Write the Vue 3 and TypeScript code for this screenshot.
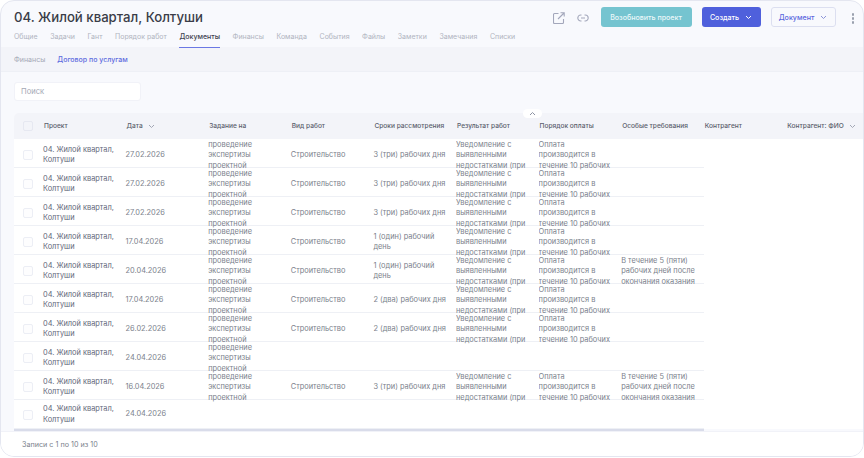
<script setup lang="ts">
interface Row {
  date: string
  task: boolean
  kind: string
  term: string
  result: boolean
  special: boolean
}

const tabs = ['Общие', 'Задачи', 'Гант', 'Порядок работ', 'Документы', 'Финансы', 'Команда', 'События', 'Файлы', 'Заметки', 'Замечания', 'Списки']
const headers = ['Задание на', 'Вид работ', 'Сроки рассмотрения', 'Результат работ', 'Порядок оплаты', 'Особые требования', 'Контрагент']

const three = '3 (три) рабочих дня'
const one = '1 (один) рабочий день'
const two = '2 (два) рабочих дня'
const build = 'Строительство'

const rows: Row[] = [
  { date: '27.02.2026', task: true, kind: build, term: three, result: true, special: false },
  { date: '27.02.2026', task: true, kind: build, term: three, result: true, special: false },
  { date: '27.02.2026', task: true, kind: build, term: three, result: true, special: false },
  { date: '17.04.2026', task: true, kind: build, term: one, result: true, special: false },
  { date: '20.04.2026', task: true, kind: build, term: one, result: true, special: true },
  { date: '17.04.2026', task: true, kind: build, term: two, result: true, special: false },
  { date: '26.02.2026', task: true, kind: build, term: two, result: true, special: false },
  { date: '24.04.2026', task: true, kind: '', term: '', result: false, special: false },
  { date: '16.04.2026', task: true, kind: build, term: three, result: true, special: true },
  { date: '24.04.2026', task: false, kind: '', term: '', result: false, special: false },
]
</script>

<template>
  <div class="page">
    <header class="top">
      <div class="top-left">
        <h1 class="title">04. Жилой квартал, Колтуши</h1>
        <nav class="tabs">
          <span v-for="t in tabs" :key="t" class="tab" :class="{ active: t === 'Документы' }">{{ t }}</span>
        </nav>
      </div>
      <div class="actions">
        <svg class="icon" width="12" height="12" viewBox="0 0 12 12" fill="none" stroke="#a3a7bb" stroke-width="1.1">
          <path d="M5.5 1.5H1.5a1 1 0 0 0-1 1v8a1 1 0 0 0 1 1h8a1 1 0 0 0 1-1V7" />
          <path d="M5 7l6-6M7.5.8h3.7v3.7" />
        </svg>
        <svg class="icon link" width="12" height="8" viewBox="0 0 12 8" fill="none" stroke="#a3a7bb" stroke-width="1.1">
          <path d="M4.5 1H3.8a3 3 0 0 0 0 6h.7M7.5 1h.7a3 3 0 0 1 0 6h-.7M4 4h4" />
        </svg>
        <button class="btn resume">Возобновить проект</button>
        <button class="btn create">Создать
          <svg width="7" height="5" viewBox="0 0 7 5" fill="none" stroke="#fff" stroke-width="1"><path d="m1 1 2.5 2.5L6 1" /></svg>
        </button>
        <button class="btn doc">Документ
          <svg width="7" height="5" viewBox="0 0 7 5" fill="none" stroke="#8d95d8" stroke-width="1"><path d="m1 1 2.5 2.5L6 1" /></svg>
        </button>
        <span class="dots"><i></i><i></i><i></i></span>
      </div>
    </header>

    <div class="subtabs">
      <span class="subtab">Финансы</span>
      <span class="subtab current">Договор по услугам</span>
    </div>

    <div class="search-row">
      <div class="search">Поиск</div>
    </div>

    <div class="table-wrap">
      <button class="collapse">
        <svg width="7" height="5" viewBox="0 0 7 5" fill="none" stroke="#8d93a3" stroke-width="1"><path d="m1 4 2.5-2.5L6 4" /></svg>
      </button>
      <div class="line head">
        <div class="check-cell"><span class="check"></span></div>
        <div class="h">Проект</div>
        <div class="h">Дата
          <svg class="chev" width="7" height="5" viewBox="0 0 7 5" fill="none" stroke="#a3a7b5" stroke-width="1"><path d="m1 1 2.5 2.5L6 1" /></svg>
        </div>
        <div v-for="h in headers" :key="h" class="h">{{ h }}</div>
        <div class="h">Контрагент: ФИО
          <svg class="chev" width="7" height="5" viewBox="0 0 7 5" fill="none" stroke="#a3a7b5" stroke-width="1"><path d="m1 1 2.5 2.5L6 1" /></svg>
        </div>
      </div>
      <div v-for="(r, i) in rows" :key="i" class="line row">
        <div class="check-cell"><span class="check"></span></div>
        <div class="c project">04. Жилой квартал, Колтуши</div>
        <div class="c date">{{ r.date }}</div>
        <div class="c"><span v-if="r.task" class="clip">проведение экспертизы проектной документации</span></div>
        <div class="c">{{ r.kind }}</div>
        <div class="c">{{ r.term }}</div>
        <div class="c"><span v-if="r.result" class="clip">Уведомление с выявленными недостатками (при наличии)</span></div>
        <div class="c"><span v-if="r.result" class="clip">Оплата производится в течение 10 рабочих дней</span></div>
        <div class="c"><span v-if="r.special" class="clip">В течение 5 (пяти) рабочих дней после окончания оказания услуг</span></div>
      </div>
      <div class="table-end"></div>
    </div>

    <footer class="foot">Записи с 1 по 10 из 10</footer>
  </div>
</template>

<style>
html, body {
  margin: 0;
  background: #fff;
}
</style>

<style scoped>
.page {
  box-sizing: border-box;
  width: 864px;
  height: 457px;
  background: #f8f9fd;
  border: 1px solid #e4e6f0;
  border-radius: 14px;
  font-family: Inter, "Liberation Sans", sans-serif;
  overflow: hidden;
  color: #6f7482;
}

.top {
  display: flex;
  justify-content: space-between;
  height: 46px;
  padding: 0 9px 0 13px;
}
.title {
  margin: 8px 0 0;
  font-size: 13.2px;
  line-height: 17px;
  font-weight: 500;
  color: #3a3d48;
}
.tabs {
  display: flex;
  gap: 12.6px;
  margin-top: 2px;
}
.tab {
  font-size: 7px;
  line-height: 18px;
  height: 19px;
  color: #b0b4c0;
  white-space: nowrap;
}
.tab.active {
  color: #3f4350;
  font-weight: 500;
  border-bottom: 1px solid #6b78e4;
}

.actions {
  display: flex;
  align-items: flex-start;
  padding-top: 6px;
}
.icon {
  margin-top: 5px;
}
.icon.link {
  margin: 7px 12px 0 12px;
}
.btn {
  height: 20px;
  border-radius: 3px;
  border: 1px solid transparent;
  font-family: inherit;
  font-size: 7.1px;
  font-weight: 500;
  padding: 0;
  display: flex;
  align-items: center;
  justify-content: center;
  gap: 6px;
}
.resume {
  width: 91px;
  background: #75c4d0;
  color: #eaf7f9;
}
.create {
  width: 59px;
  margin-left: 10px;
  background: #4f60dc;
  color: #fff;
}
.doc {
  width: 65px;
  margin-left: 10px;
  background: #f8f9fd;
  border-color: #dcdff0;
  color: #5a68dd;
}
.dots {
  display: flex;
  flex-direction: column;
  gap: 1.5px;
  margin: 6px 0 0 16px;
}
.dots i {
  width: 2.5px;
  height: 2.5px;
  border-radius: 50%;
  background: #9aa0ae;
}

.subtabs {
  display: flex;
  gap: 12px;
  align-items: center;
  height: 24px;
  padding-left: 13px;
  background: #f3f4f9;
  border-bottom: 1px solid #eef0f6;
}
.subtab {
  font-size: 7px;
  color: #a4a8b5;
}
.subtab.current {
  color: #5e6cdf;
  font-weight: 500;
}

.search-row {
  padding: 10px 13px 0;
  height: 19px;
}
.search {
  box-sizing: border-box;
  width: 127px;
  height: 19px;
  border-radius: 3px;
  background: #fff;
  border: 1px solid #f1f2f8;
  padding-left: 6px;
  font-size: 7.6px;
  line-height: 17px;
  color: #a4a8b5;
}

.table-wrap {
  position: relative;
  margin: 12px 0 0 13px;
}
.collapse {
  position: absolute;
  top: -4px;
  left: 509px;
  width: 19px;
  height: 9px;
  padding: 0;
  border: 0;
  border-radius: 5px;
  background: #fff;
  display: flex;
  align-items: center;
  justify-content: center;
  z-index: 2;
}
.line {
  display: grid;
  grid-template-columns: 30px repeat(9, 82.6px) 1fr;
}
.head {
  height: 26px;
  background: #f3f4f9;
  border-radius: 5px 0 0 0;
  align-items: center;
}
.h {
  font-size: 6.6px;
  font-weight: 500;
  color: #5b5f6d;
  white-space: nowrap;
  display: flex;
  align-items: center;
  gap: 5px;
}
.chev {
  flex: none;
}
.row {
  height: 29px;
  background: #fff;
  align-items: center;
  background-image: linear-gradient(#eef0f5, #eef0f5);
  background-size: 690px 1px;
  background-repeat: no-repeat;
  background-position: left bottom;
}
.check-cell {
  display: flex;
  align-items: center;
  justify-content: center;
  padding-right: 3px;
}
.check {
  box-sizing: border-box;
  width: 10px;
  height: 10px;
  border: 1px solid #eceef5;
  border-radius: 2px;
  background: #fdfdfe;
}
.head .check {
  background: #f3f4f9;
  border-color: #e6e8f1;
}
.c {
  margin-left: -1px;
  padding-right: 8px;
  font-size: 7.4px;
  line-height: 10.3px;
  color: #7b7f8c;
}
.project {
  color: #63677a;
}
.clip {
  display: block;
  height: 31px;
  margin-top: 1px;
  overflow: hidden;
}
.table-end {
  height: 2px;
  width: 690px;
  background: #d9dcea;
}
.foot {
  box-sizing: border-box;
  height: 25px;
  border-top: 1px solid #f1f2f8;
  background: #fff;
  padding: 7px 0 0 21px;
  font-size: 7.2px;
  line-height: 12px;
  color: #7b7f8c;
}
</style>
